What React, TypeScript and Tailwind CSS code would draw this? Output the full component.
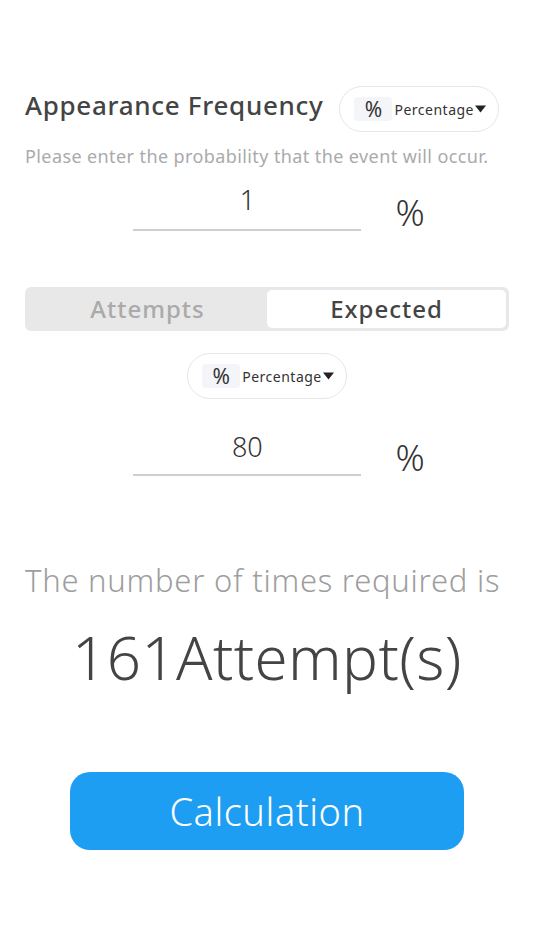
import { useState } from "react";

const font = { fontFamily: '"Noto Sans", "Noto Sans CJK JP", sans-serif' };

function UnitPicker() {
  return (
    <button
      type="button"
      className="flex h-[46px] items-center rounded-full border border-[#e6e6e6] bg-white pl-[14px] pr-[12px]"
    >
      <span className="flex h-[24px] w-[38px] items-center justify-center rounded-[4px] bg-[#f4f5f9] text-[21px] leading-none text-[#333]">
        %
      </span>
      <span className="ml-[2px] text-[14px] tracking-[0.5px] text-[#333]">Percentage</span>
      <svg width="11" height="8" viewBox="0 0 11 8" className="ml-[1px]">
        <path d="M0 0.5h11L5.5 7.5z" fill="#222" />
      </svg>
    </button>
  );
}

function PercentInput({ value, line }: { value: string; line: string }) {
  return (
    <div className="flex items-end justify-center pl-[24px]">
      <div
        className={`w-[228px] border-b-2 border-[#cfcfcf] text-center text-[27px] font-light leading-none text-[#333] ${line}`}
      >
        {value}
      </div>
      <div className="ml-[34px] text-[36px] font-light leading-none text-[#333]">%</div>
    </div>
  );
}

export default function App() {
  const [tab, setTab] = useState<"attempts" | "expected">("expected");

  const segOn = "flex-1 rounded-[5px] bg-white text-[24px] font-medium tracking-[1px] text-[#444]";
  const segOff = "flex-1 text-[24px] font-medium tracking-[1px] text-[#aaa]";

  return (
    <div className="min-h-screen bg-white px-[25px] pt-[86px]" style={font}>
      <div className="flex items-center gap-[16px]">
        <h1 className="pb-[8px] text-[26px] font-medium leading-[36px] tracking-[0.7px] text-[#444]">
          Appearance Frequency
        </h1>
        <UnitPicker />
      </div>
      <p className="mt-[12px] text-[18px] leading-[24px] tracking-[0.4px] text-[#aaa]">
        Please enter the probability that the event will occur.
      </p>

      <div className="mt-[18px]">
        <PercentInput value="1" line="pb-[16px]" />
      </div>

      <div className="mt-[56px] flex h-[44px] rounded-[6px] bg-[#e8e8e8] p-[3px]">
        <button type="button" onClick={() => setTab("attempts")} className={tab === "attempts" ? segOn : segOff}>
          Attempts
        </button>
        <button type="button" onClick={() => setTab("expected")} className={tab === "expected" ? segOn : segOff}>
          Expected
        </button>
      </div>

      <div className="mt-[22px] flex justify-center">
        <UnitPicker />
      </div>

      <div className="mt-[34px]">
        <PercentInput value="80" line="pb-[14px]" />
      </div>

      <p className="mt-[86px] text-[31px] font-light leading-[36px] tracking-[0.75px] text-[#9e9e9e]">
        The number of times required is
      </p>
      <p className="mt-[29px] text-center text-[60px] font-light leading-none tracking-[0.4px] text-[#444]">
        161Attempt(s)
      </p>

      <div className="mt-[85px] flex justify-center">
        <button
          type="button"
          className="h-[78px] w-[394px] rounded-[20px] bg-[#1e9ef2] text-[38px] font-light tracking-[0.5px] text-white"
        >
          Calculation
        </button>
      </div>
    </div>
  );
}
